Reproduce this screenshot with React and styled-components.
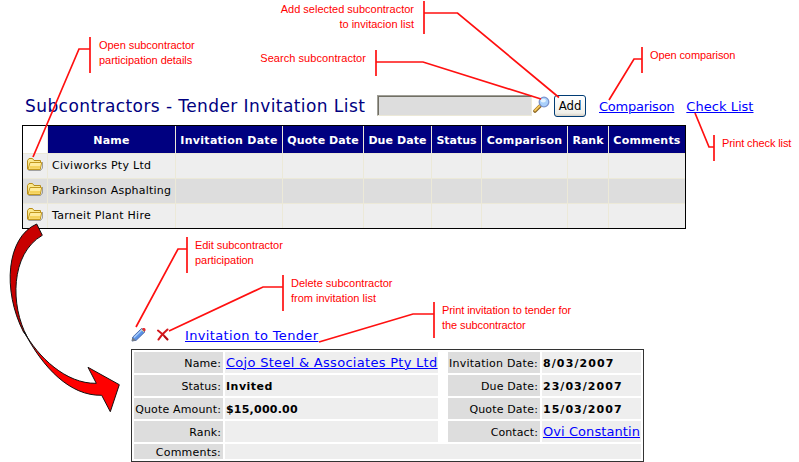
import React from "react";
import styled, { createGlobalStyle } from "styled-components";

const GlobalStyle = createGlobalStyle`
  body { margin: 0; background: #fff; }
  * { box-sizing: border-box; }
`;

const verdana = `Verdana, "DejaVu Sans", sans-serif`;

const Page = styled.main`
  position: relative;
  width: 799px;
  height: 462px;
  padding: 95px 0 0 22px;
  overflow: hidden;
  font: 11px/15px ${verdana};
  color: #000;
`;

const Toolbar = styled.header`
  display: flex;
  align-items: flex-start;
  height: 30px;
`;

const Title = styled.h1`
  width: 352px;
  margin: 0 0 0 3px;
  font: 17px/22px ${verdana};
  letter-spacing: 0.42px;
  color: #000080;
  white-space: nowrap;
`;

const SearchBox = styled.input`
  width: 155px;
  height: 21px;
  padding: 0 3px;
  border: 1px solid;
  border-color: #a09f97 #ece9d8 #ece9d8 #a09f97;
  box-shadow: inset 1px 1px 0 #716f64;
  border-radius: 0;
  background: #ddd;
`;

const IconSlot = styled.span`
  display: block;
  flex: none;
  width: 17px;
  height: 17px;
  margin: ${(p) => p.$m || 0};
  svg { display: block; }
`;

const AddButton = styled.button`
  width: 32px;
  height: 22px;
  margin: 0 13px 0 4px;
  padding: 0 0 1px;
  border: 1px solid #003c74;
  border-radius: 3px;
  background: linear-gradient(#fff, #f0f0ea 85%, #d6d0c5);
  font: 13px/18px Tahoma, "DejaVu Sans Condensed", "DejaVu Sans", sans-serif;
  font-stretch: condensed;
  color: #000;
`;

const Link = styled.a`
  margin: ${(p) => p.$m || 0};
  font: 13px/16px ${verdana};
  letter-spacing: ${(p) => p.$ls || 0}px;
  color: #0000ff;
  text-decoration: underline;
  text-decoration-thickness: 1px;
  text-underline-offset: 1px;
  white-space: nowrap;
`;

const ListTable = styled.section`
  display: grid;
  grid-template-columns: 24px 128px 107px 81px 68px 50px 86px 41px 77px;
  grid-template-rows: 27px 25px 25px 25px;
  width: 664px;
  height: 104px;
  border: 1px solid #000;
`;

const HeadCell = styled.div`
  display: flex;
  justify-content: center;
  align-items: center;
  padding-top: 1px;
  border-left: ${(p) => (p.$blank ? 0 : 1)}px solid #ece9d8;
  background: ${(p) => (p.$blank ? "#fff" : "#000080")};
  font-weight: bold;
  letter-spacing: ${(p) => p.$ls || 0}px;
  color: #fff;
  white-space: nowrap;
`;

const Cell = styled.div`
  padding: ${(p) => (p.$icon ? "3px 0 0 3px" : "4px 0 0 4px")};
  border-left: ${(p) => (p.$icon ? 0 : 1)}px solid #ece9d8;
  border-top: 1px solid #ece9d8;
  background: ${(p) => (p.$alt ? "#ddd" : "#eee")};
  letter-spacing: ${(p) => p.$ls || 0}px;
  white-space: nowrap;
`;

const ActionBar = styled.nav`
  display: flex;
  height: 22px;
  margin: 98px 0 0 109px;
`;

const DetailBox = styled.section`
  display: grid;
  grid-template-columns: 89px 213px 6px 92px 99px;
  grid-template-rows: 21px 21px 21px 21px 15px;
  gap: 2px;
  width: 513px;
  height: 113px;
  margin-left: 109px;
  padding: 2px;
  border: 1px solid #333;
`;

const Spacer = styled.span``;

const Label = styled.div`
  padding-right: 2px;
  background: #ddd;
  line-height: ${(p) => (p.$short ? 17 : 23)}px;
  letter-spacing: ${(p) => p.$ls || 0}px;
  text-align: right;
  white-space: nowrap;
`;

const Value = styled.div`
  display: flex;
  grid-column: ${(p) => (p.$wide ? "2 / -1" : "auto")};
  padding-left: 1px;
  background: #eee;
  font-weight: bold;
  line-height: 23px;
  letter-spacing: ${(p) => p.$ls || 0}px;
  white-space: nowrap;
`;

const Overlay = styled.svg`
  position: absolute;
  left: 0;
  top: 0;
  pointer-events: none;
`;

const Note = styled.p`
  position: absolute;
  left: ${(p) => p.$x}px;
  top: ${(p) => p.$y}px;
  width: ${(p) => p.$w || 150}px;
  margin: 0;
  font: 11px/15px Arial, "Liberation Sans", sans-serif;
  letter-spacing: ${(p) => p.$ls || 0}px;
  text-align: ${(p) => (p.$right ? "right" : "left")};
  color: #ff0000;
  white-space: pre;
`;

const Folder = () => (
  <svg width="18" height="16" viewBox="0 0 18 16">
    <path d="M2.500 13.500H14.500L16.500 11V5" fill="none" stroke="#777" opacity=".65" />
    <path d="M1.500 12V3.500L3 1.500H6.500L8 3.500H14.500V12Z" fill="#fbe98f" stroke="#b88d19" />
    <path d="M2 12.500L4 5.500H15.700L14.200 12.500Z" fill="#ffec9c" stroke="#c39a20" />
    <path d="M3.300 11.700H13.700L14.300 9H4Z" fill="#f4d25c" />
  </svg>
);

const Magnifier = () => (
  <svg width="17" height="17" viewBox="0 0 17 17">
    <path d="M2 15L7 10" stroke="#8a6420" strokeWidth="3.600" strokeLinecap="round" />
    <path d="M2 14.500L6.500 10" stroke="#f5c75a" strokeWidth="1.800" strokeLinecap="round" />
    <circle cx="11" cy="6" r="4.800" fill="#a9d0fb" stroke="#7b93cc" strokeWidth="1.300" />
    <ellipse cx="10.300" cy="4.600" rx="2.600" ry="1.900" fill="#e6f4ff" />
  </svg>
);

const Pencil = () => (
  <svg width="16" height="16" viewBox="0 0 16 16">
    <path d="M1 14L1.800 10L10.500 1.500L14 4.800L5.200 13.300Z" fill="#5b92e6" stroke="#35549b" strokeWidth=".8" />
    <path d="M3 10.500L11 2.700" stroke="#a9cdfa" strokeWidth="1.500" />
    <path d="M11 1.800L11.800 1H13.500L14.500 2V3.600L13.700 4.400Z" fill="#e8262a" />
    <path d="M10.300 2.300L13.200 5.200" stroke="#f2c879" />
    <path d="M.8 14.200L1.600 10.500L5 13.400Z" fill="#777b80" />
  </svg>
);

const Cross = () => (
  <svg width="14" height="14" viewBox="0 0 14 14" fill="none" strokeLinecap="round">
    <path d="M2 2.500Q7 6 11.500 11.500M11.500 1.500Q6 6 2.500 11.500" stroke="#d3161b" strokeWidth="2.100" />
    <path d="M8.500 8.500L11.500 11.500" stroke="#a61018" strokeWidth="1.300" />
  </svg>
);

const leaders = [
  "M90 49H79L33 157",
  "M424 13H457.500L559 97.500",
  "M376 62H423L541 99",
  "M642 59H634L609 100",
  "M714 147H709L695 113",
  "M187 249H178L136 327",
  "M283 287H263L169 331",
  "M434 314H413L319 342",
];
const bars = [
  "M90 37V73", "M424 1V34", "M376 50V76", "M642 47V73",
  "M714 135V161", "M187 237V273", "M283 275V311", "M434 302V338",
];

const heads = [
  ["Name", 0.2], ["Invitation Date", 0.28], ["Quote Date", 0.08], ["Due Date", 0.08],
  ["Status", 0], ["Comparison", 0.18], ["Rank", 0], ["Comments", 0.2],
];
const rows = [["Civiworks Pty Ltd", 0.28], ["Parkinson Asphalting", 0.2], ["Tarneit Plant Hire", 0.27]];

export default function App() {
  return (
    <Page>
      <GlobalStyle />
      <Toolbar>
        <Title>Subcontractors - Tender Invitation List</Title>
        <SearchBox aria-label="Search subcontractor" />
        <IconSlot $m="1px 0 0 1px"><Magnifier /></IconSlot>
        <AddButton>Add</AddButton>
        <Link $ls={-0.25} $m="4px 12px 0 0">Comparison</Link>
        <Link $ls={0.03} $m="4px 0 0">Check List</Link>
      </Toolbar>
      <ListTable>
        <HeadCell $blank />
        {heads.map(([t, ls]) => (
          <HeadCell key={t} $ls={ls}>{t}</HeadCell>
        ))}
        {rows.map(([t, ls], i) => (
          <React.Fragment key={t}>
            <Cell $icon $alt={i === 1}><Folder /></Cell>
            <Cell $alt={i === 1} $ls={ls}>{t}</Cell>
            {heads.slice(1).map(([k]) => <Cell key={k} $alt={i === 1} />)}
          </React.Fragment>
        ))}
      </ListTable>
      <ActionBar>
        <IconSlot><Pencil /></IconSlot>
        <IconSlot $m="1px 12px 0 8px"><Cross /></IconSlot>
        <Link $ls={0.36} $m="1px 0 0">Invitation to Tender</Link>
      </ActionBar>
      <DetailBox>
        <Label $ls={0.1}>Name:</Label>
        <Value><Link $ls={0.29} $m="3px 0 0">Cojo Steel &amp; Associates Pty Ltd</Link></Value>
        <Spacer />
        <Label $ls={0.22}>Invitation Date:</Label>
        <Value $ls={1.1}>8/03/2007</Value>
        <Label $ls={0.1}>Status:</Label>
        <Value $ls={0.5}>Invited</Value>
        <Spacer />
        <Label $ls={0.15}>Due Date:</Label>
        <Value $ls={1.03}>23/03/2007</Value>
        <Label $ls={0.15}>Quote Amount:</Label>
        <Value $ls={0.22}>$15,000.00</Value>
        <Spacer />
        <Label $ls={0.15}>Quote Date:</Label>
        <Value $ls={1.03}>15/03/2007</Value>
        <Label $ls={0.1}>Rank:</Label>
        <Value />
        <Spacer />
        <Label $ls={0.1}>Contact:</Label>
        <Value><Link $ls={0.07} $m="3px 0 0">Ovi Constantin</Link></Value>
        <Label $short $ls={0.2}>Comments:</Label>
        <Value $wide />
      </DetailBox>
      <Overlay width="799" height="462" viewBox="0 0 799 462" fill="none">
        <g stroke="#111" strokeWidth="1" strokeLinejoin="miter">
          <path d="M36.700 224C6.500 237 2 290 23.500 332L27 336.500C10.500 306 10 254 42.300 235.300Z" fill="#c80000" />
          <path d="M24 331.500C38 357 66 384 96.300 383.300L88 367.300L119.300 384.700L110.300 411.700L101.700 395.300C70 396 43 368 24 331.500Z" fill="#ff0000" />
        </g>
        <g stroke="#ff1010" strokeWidth="1.700">
          {leaders.map((d) => <path key={d} d={d} />)}
          {bars.map((d) => <path key={d} d={d} />)}
        </g>
      </Overlay>
      <Note $x={99} $y={38} $ls={-0.05}>{"Open subcontractor\nparticipation details"}</Note>
      <Note $x={264} $y={2} $right>{"Add selected subcontractor\nto invitacion list"}</Note>
      <Note $x={216} $y={51} $right $ls={0.06}>Search subcontractor</Note>
      <Note $x={650} $y={48} $ls={-0.1}>Open comparison</Note>
      <Note $x={722} $y={136} $w={77} $ls={-0.1}>Print check list</Note>
      <Note $x={195} $y={238} $ls={-0.05}>{"Edit subcontractor\nparticipation"}</Note>
      <Note $x={291} $y={276}>{"Delete subcontractor\nfrom invitation list"}</Note>
      <Note $x={442} $y={303} $ls={-0.08}>{"Print invitation to tender for\nthe subcontractor"}</Note>
    </Page>
  );
}
